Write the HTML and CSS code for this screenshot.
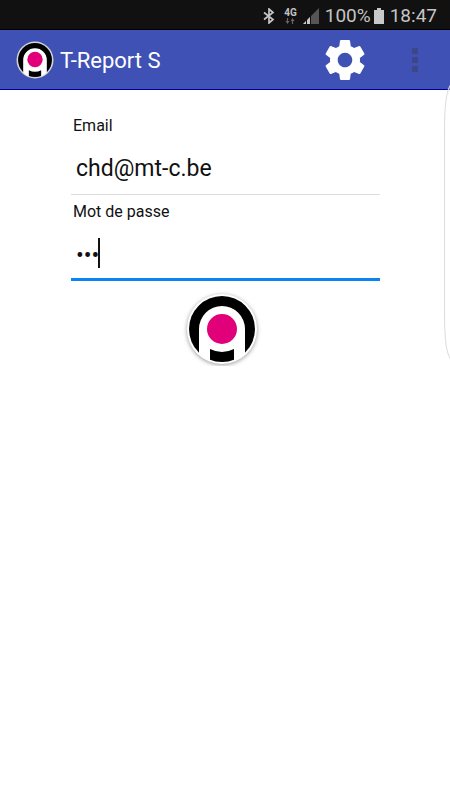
FILE: index.html
```
<!DOCTYPE html>
<html lang="fr">
<head>
  <meta charset="utf-8">
  <meta name="viewport" content="width=device-width, initial-scale=1">
  <title>T-Report S</title>
  <link rel="stylesheet" href="styles.css">
</head>
<body>
  <div class="status-bar">
    <svg class="bluetooth" viewBox="0 0 12 16" width="12" height="16">
      <path d="M1 4.5L10 11.5L6 15V1L10 4.5L1 11.5" fill="none" stroke="#c4c4c4" stroke-width="1.7"/>
    </svg>
    <div class="network">
      <span>4G</span>
      <svg viewBox="0 0 10 6" width="10" height="6">
        <path d="M2.5 0V4M7.5 2V6" stroke="#666" stroke-width="1.2"/>
        <path d="M0.5 3H4.5L2.5 6ZM5.5 3H9.5L7.5 0Z" fill="#666"/>
      </svg>
    </div>
    <svg class="signal" viewBox="0 0 16 16" width="16" height="16">
      <path d="M16 0V16H0Z" fill="#555"/>
      <path d="M0 16L3 13V16ZM4 12L7 9V16H4Z" fill="#c8c8c8"/>
      <path d="M3.5 12V16M7.5 8V16" stroke="#111"/>
    </svg>
    <span class="percent">100%</span>
    <svg class="battery" viewBox="0 0 10 16" width="10" height="16">
      <path d="M3 0H7V2H10V16H0V2H3Z" fill="#c8c8c8"/>
    </svg>
    <span class="clock">18:47</span>
  </div>

  <header class="app-bar">
    <svg class="app-logo" viewBox="0 0 74 74" width="38" height="38">
      <circle cx="37" cy="37" r="36" fill="#d4d4d4"/>
      <circle cx="37" cy="37" r="33" fill="#000"/>
      <path d="M14 62V37A23 23 0 0 1 60 37V62Q55 67 49 69V57Q37 63 25 57V69Q19 67 14 62Z" fill="#fff"/>
      <circle cx="37" cy="36" r="15" fill="#e2007a"/>
    </svg>
    <h1>T-Report S</h1>
    <button type="button" class="settings" aria-label="Paramètres">
      <svg viewBox="0 0 24 24" width="50" height="50">
        <path d="M19.14 12.94c.04-.3.06-.61.06-.94 0-.32-.02-.64-.07-.94l2.03-1.58c.18-.14.23-.41.12-.61l-1.92-3.32c-.12-.22-.37-.29-.59-.22l-2.39.96c-.5-.38-1.03-.7-1.62-.94l-.36-2.54c-.04-.24-.24-.41-.48-.41h-3.84c-.24 0-.43.17-.47.41l-.36 2.54c-.59.24-1.13.57-1.62.94l-2.39-.96c-.22-.08-.47 0-.59.22L2.74 8.87c-.12.21-.08.47.12.61l2.03 1.58c-.05.3-.09.63-.09.94s.02.64.07.94l-2.03 1.58c-.18.14-.23.41-.12.61l1.92 3.32c.12.22.37.29.59.22l2.39-.96c.5.38 1.03.7 1.62.94l.36 2.54c.05.24.24.41.48.41h3.84c.24 0 .44-.17.47-.41l.36-2.54c.59-.24 1.13-.56 1.62-.94l2.39.96c.22.08.47 0 .59-.22l1.92-3.32c.12-.22.07-.47-.12-.61l-2.01-1.58zM12 15.5c-1.93 0-3.5-1.57-3.5-3.5s1.57-3.5 3.5-3.5 3.5 1.57 3.5 3.5-1.57 3.5-3.5 3.5z" fill="#fff"/>
      </svg>
    </button>
    <button type="button" class="more" aria-label="Plus d'options">
      <svg viewBox="0 0 6 24" width="6" height="24">
        <path d="M0 0H6V6H0ZM0 9H6V15H0ZM0 18H6V24H0Z" fill="#3d4785"/>
      </svg>
    </button>
  </header>

  <!-- edge panel handle -->
  <svg class="edge-handle" viewBox="0 0 7 278" width="7" height="278">
    <path d="M8 1C3 8 1.500 24 1.500 48V230C1.500 254 3 270 8 277Z" fill="#fff" fill-opacity="0.3" stroke="#dcdcdc"/>
  </svg>

  <form class="login">
    <label for="email">Email</label>
    <input type="email" id="email" value="chd@mt-c.be">
    <label for="password">Mot de passe</label>
    <div class="password-field">
      <input type="password" id="password" value="mtc">
      <span class="caret"></span>
    </div>
    <button type="button" class="submit" aria-label="Connexion">
      <svg viewBox="0 0 74 74" width="74" height="74">
        <circle cx="37" cy="37" r="35" fill="#fff"/>
        <circle cx="37" cy="37" r="33" fill="#000"/>
        <path d="M14 62V37A23 23 0 0 1 60 37V62Q55 67 49 69V57Q37 63 25 57V69Q19 67 14 62Z" fill="#fff"/>
        <circle cx="37" cy="37" r="15" fill="#e2007a"/>
      </svg>
    </button>
  </form>
</body>
</html>
```
FILE: styles.css
```
* {
  box-sizing: border-box;
}

body {
  margin: 0;
  background-color: #fff;
  color: #111;
  font-family: Roboto, "Liberation Sans", sans-serif;
}

button {
  padding: 0;
  border: none;
  background: none;
  cursor: pointer;
}

svg {
  display: block;
}

/* status bar */
.status-bar {
  display: flex;
  align-items: center;
  justify-content: flex-end;
  height: 30px;
  padding: 2px 13px 0 0;
  background-color: #111;
  border-bottom: 1px solid #000;
  color: #c4c4c4;
  font-size: 19px;
}

.network {
  display: flex;
  flex-direction: column;
  align-items: center;
  margin: 0 6px 0 9px;
  font-size: 10px;
  font-weight: bold;
  line-height: 10px;
}

.percent {
  margin: 0 3px 0 6px;
}

.clock {
  margin-left: 6px;
}

/* app bar */
.app-bar {
  display: flex;
  align-items: center;
  height: 60px;
  padding: 0 32px 0 16px;
  background-color: #3f51b5;
  border-bottom: 1px solid #0000a0;
}

.app-bar h1 {
  flex: 1;
  margin: 0 0 0 6px;
  padding-top: 2px;
  color: #fff;
  font-size: 22px;
  font-weight: normal;
}

.settings {
  margin-right: 42px;
}

.edge-handle {
  position: absolute;
  top: 83px;
  right: 0;
}

/* login form */
.login {
  display: flex;
  flex-direction: column;
  padding: 24px 70px 0 71px;
}

.login label {
  padding-left: 2px;
  font-size: 16px;
  line-height: 24px;
}

.login input {
  width: 100%;
  height: 57px;
  padding: 5px 5px 0;
  border: none;
  border-bottom: 1px solid #ddd;
  outline: none;
  background: none;
  color: #111;
  font-family: inherit;
  font-size: 23px;
}

.login label[for="password"] {
  margin-top: 5px;
}

.password-field {
  position: relative;
}

.login .password-field input {
  padding-top: 8px;
  border-bottom: 3px solid #0a84f0;
}

.caret {
  position: absolute;
  top: 14px;
  left: 27px;
  width: 2px;
  height: 30px;
  background-color: #111;
}

.submit {
  align-self: center;
  margin: 11px 7px 0 0;
  border-radius: 50%;
  filter: drop-shadow(0 1px 2px rgba(0, 0, 0, 0.4));
}
```
